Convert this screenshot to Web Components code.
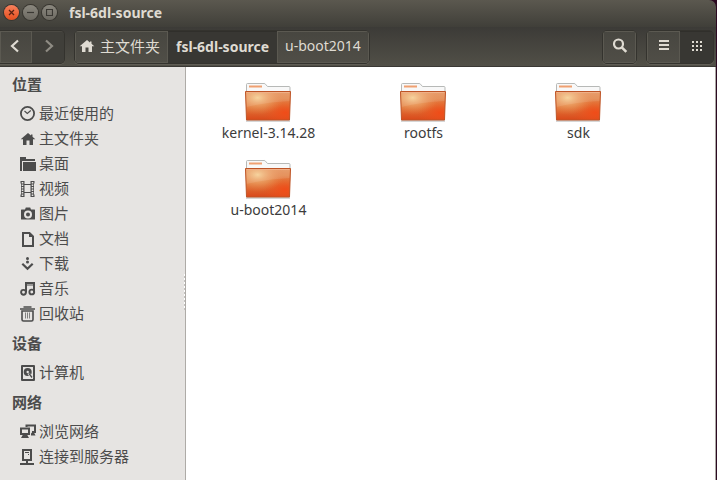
<!DOCTYPE html>
<html lang="zh-CN">
<head>
<meta charset="utf-8">
<title>fsl-6dl-source</title>
<style>
html,body{height:100%}
body{margin:0;background:#2c0a22;overflow:hidden;font-family:"Noto Sans","Noto Sans CJK SC",sans-serif;font-size:14px}
</style>
</head>
<body>
<file-window></file-window>
<script>
const S = (w, h, body, vb) => `<svg width="${w}" height="${h}" viewBox="${vb || `0 0 ${w} ${h}`}" aria-hidden="true">${body}</svg>`;
const stroke = 'fill="none" stroke="currentColor"';
const ICONS = {
  close: S(7,7,`<path d="M1 1l5 5M6 1L1 6" ${stroke} stroke-width="1.3"/>`),
  min: S(7,7,`<path d="M0 3.5h7" ${stroke} stroke-width="1.2"/>`),
  max: S(7,7,`<path d="M.5.5h6v6h-6z" ${stroke} stroke-width="1.2"/>`),
  back: S(16,16,`<path d="M10 2.500L4 8l6 5.500" ${stroke} stroke-width="2.2"/>`),
  forward: S(16,16,`<path d="M6 2.500L12 8l-6 5.500" ${stroke} stroke-width="2.2"/>`),
  home: S(16,16,`<path d="M8 2L.7 8.300H3V14h3.500V9.500h3V14H13V8.300h2.300L12.500 5.800V3.500h-1.500v1z" fill="currentColor"/>`),
  search: S(16,16,`<circle cx="6.500" cy="6" r="4.500" ${stroke} stroke-width="2.200"/><path d="M9.800 9.300l4.500 4.500" ${stroke} stroke-width="2.600"/>`),
  list: S(16,16,`<path d="M3 3h10M3 7h10M3 11h10" ${stroke} stroke-width="2"/>`),
  grid: S(16,16,[3,7,11].map(y=>[3,7,11].map(x=>`<rect x="${x}" y="${y}" width="2" height="2" fill="currentColor"/>`).join('')).join('')),
  recent: S(16,16,`<circle cx="7.500" cy="7.500" r="6.600" ${stroke} stroke-width="1.800"/><path d="M4.500 5l2.800 2.500 3.500-3" ${stroke} stroke-width="1.200"/>`),
  desktop: S(16,16,`<path d="M0 1h6v2h9v2H2v10H0z" fill="currentColor"/><path d="M3 6h13v9H3z" fill="currentColor"/>`),
  video: S(16,16,`<path d="M2.500 0v16M12.500 0v16" ${stroke} stroke-width="4"/><path d="M4 3.500h8M4 11.500h8" ${stroke}/><path d="M2.500 1v15M12.500 1v15" stroke="#e6e4e2" stroke-width="1.600" stroke-dasharray="1.500 1"/><path d="M0 2.500h1v11H0zM14 2.500h1v11h-1z" fill="#e6e4e2"/>`),
  photo: S(16,16,`<path fill-rule="evenodd" d="M1.500 3.500H5l.8-2h4.400l.8 2h3.500q.5 0 .5.500v9q0 .5-.5.500h-13q-.5 0-.5-.500v-9q0-.5.500-.500zM8 4.500a4 4 0 1 0 0 8 4 4 0 0 0 0-8zm0 2a2 2 0 1 1 0 4 2 2 0 0 1 0-4z" fill="currentColor"/>`),
  doc: S(16,16,`<path d="M3 2h6.500L13 5.500V15H3z" ${stroke} stroke-width="2"/><path d="M9 2v4h4z" fill="currentColor"/>`),
  download: S(16,16,`<circle cx="7.500" cy="2.500" r="1.500" fill="currentColor"/><circle cx="7.500" cy="6" r="1.500" fill="currentColor"/><path d="M2.300 7.800l5.200 5 5.200-5" ${stroke} stroke-width="2.200"/>`),
  music: S(16,16,`<path d="M6 11.500V2h8v9" ${stroke} stroke-width="2"/><path d="M6 4h8" ${stroke}/><circle cx="3.500" cy="11.300" r="2.400" ${stroke} stroke-width="1.900"/><circle cx="11.800" cy="11" r="2.400" ${stroke} stroke-width="1.900"/>`),
  trash: S(16,16,`<path d="M3.500 1h8M0 3h15" ${stroke} stroke-width="1.600"/><path d="M2 5h11v8.500q0 1.500-1.500 1.500h-8Q2 15 2 13.500z" ${stroke} stroke-width="1.600"/><path d="M5.500 6.500v6M7.500 6.500v6M9.500 6.500v6" ${stroke} stroke-opacity=".65"/>`),
  disk: S(16,16,`<path fill-rule="evenodd" d="M2 0h12q1 0 1 1v14q0 1-1 1H2q-1 0-1-1V1q0-1 1-1zm1 2v12h10V2z" fill="currentColor"/><circle cx="7.700" cy="7" r="4" fill="currentColor"/><circle cx="7.700" cy="7" r="1.200" fill="#e6e4e2"/><path d="M8.500 8.500l4 4.500" stroke="#e6e4e2" stroke-width="2.500"/><path d="M9 8.500l3 4" ${stroke} stroke-width="1.300"/>`),
  network: S(16,16,`<path d="M6.500 3V1.500H15V8h-3" ${stroke} stroke-width="2"/><path d="M1 4.500h8V10H1z" ${stroke} stroke-width="2"/><path d="M3 10.500h4L9 14H1zM12 8.500h2l1.500 3H11v-2z" fill="currentColor"/>`),
  server: S(16,16,`<path d="M3 1h8v10H3z" ${stroke} stroke-width="2"/><path d="M5 3.500h4M8 5.500h1" ${stroke}/><path d="M7 11v4M0 15h14" ${stroke} stroke-width="2"/>`)
};
const define = (name, css, html, setup) => customElements.define(name, class extends HTMLElement {
  connectedCallback() {
    if (this.shadowRoot) return;
    const root = this.attachShadow({mode: 'open'});
    root.innerHTML = `<style>*{box-sizing:border-box}button{font:inherit;color:inherit;border:0;background:none;padding:0;margin:0}svg{display:block;flex:none}${css}</style>${typeof html === 'function' ? html(this) : html}`;
    if (setup) setup(this, root);
  }
});

define('ui-icon', ':host{display:block;flex:none}', el => ICONS[el.getAttribute('name')]);

define('title-bar', `
:host{display:flex;align-items:center;gap:4px;height:27px;padding:0 4px 2px;background:linear-gradient(#5b584f,#403f39);color:#dfdbd2;font-weight:700;border-radius:0 7px 0 0;box-sizing:border-box}
button{display:grid;place-items:center;width:15px;height:15px;border-radius:50%;background:linear-gradient(#8a877e,#6d6a62);color:#3a3833;box-shadow:0 0 0 1px #383630}
button.close{background:linear-gradient(#f7805c,#e5501f);color:#5a2212}
h1{margin:0 0 0 8px;font-size:14px;line-height:20px}`,
`<button class="close" aria-label="关闭"><ui-icon name="close"></ui-icon></button><button aria-label="最小化"><ui-icon name="min"></ui-icon></button><button aria-label="最大化"><ui-icon name="max"></ui-icon></button><h1><slot></slot></h1>`);

define('button-group', `
:host{display:flex;height:34px;box-sizing:border-box;border:1px solid #34332e;border-radius:5px;overflow:hidden;box-shadow:0 1px #605d55}
:host([start]){border-left:0;border-radius:0 5px 5px 0}`, '<slot></slot>');

define('tool-button', `
:host{display:flex}
button{display:flex;align-items:center;justify-content:center;gap:5px;min-width:32px;padding:0 var(--pad,8px) 2px;background:linear-gradient(#474640,#504e47);box-shadow:inset 0 0 0 1px #5b5951;color:#dfdbd2;line-height:20px;white-space:nowrap}
:host([active]) button{background:#383733;box-shadow:inset 0 1px #302f2b;font-weight:700}
:host([dim]) button{color:#8f8c84;background:#403f3a;box-shadow:inset 0 1px #4c4a44}
:host([wide]) button{min-width:33px}
:host([active]:not([wide])) button{padding-bottom:0}
:host([cjk]) button{font-size:15px;padding:0 8px 2px 4px}`, '<button type="button"><slot></slot></button>',
(el, root) => { const l = el.getAttribute('label'); if (l) root.querySelector('button').setAttribute('aria-label', l); });

define('tool-bar', `
:host{display:flex;align-items:center;gap:9px;height:40px;padding:0 2px 0 0;box-sizing:border-box;background:linear-gradient(#3c3b37,#514f47);border-bottom:1px solid #3a3834}
.spacer{flex:1}`,
`<button-group start><tool-button label="后退"><ui-icon name="back"></ui-icon></tool-button><tool-button dim label="前进"><ui-icon name="forward"></ui-icon></tool-button></button-group>
<button-group><tool-button cjk><ui-icon name="home"></ui-icon>主文件夹</tool-button><tool-button active>fsl-6dl-source</tool-button><tool-button>u-boot2014</tool-button></button-group>
<span class="spacer"></span>
<button-group><tool-button wide label="搜索"><ui-icon name="search"></ui-icon></tool-button></button-group>
<button-group><tool-button wide label="列表视图"><ui-icon name="list"></ui-icon></tool-button><tool-button wide active label="图标视图"><ui-icon name="grid"></ui-icon></tool-button></button-group>`);

define('side-section', `
:host{display:block}
h2{margin:0;padding:1px 12px 0;font-size:15px;line-height:33px;font-weight:700}`,
el => `<h2>${el.getAttribute('heading')}</h2><slot></slot>`);

define('side-item', `
:host{display:block}
a{display:flex;align-items:center;gap:3px;height:25px;padding-left:20px;color:inherit;text-decoration:none;font-size:15px;line-height:25px}`,
el => `<a href="#"><ui-icon name="${el.getAttribute('icon')}"></ui-icon><slot></slot></a>`);

define('side-bar', `
:host{position:relative;display:block;flex:none;width:186px;box-sizing:border-box;background:#e6e4e2;border-right:1px solid #aeaba7;color:#4c4c4c}
.grip{position:absolute;right:0;top:50%;width:1px;height:36px;background:repeating-linear-gradient(#fff 0 2px,#c4c2bf 2px 4px)}`,
`<slot></slot><span class="grip"></span>`);

define('folder-item', `
:host{display:flex;flex-direction:column;align-items:center;height:77px;color:#3c3c3c}
span{line-height:20px}`,
el => `<svg width="50" height="42" viewBox="1 -1 50 42" aria-hidden="true"><defs>
<linearGradient id="f" x1="0" y1="0" x2="0" y2="1"><stop offset="0" stop-color="#e5935c"/><stop offset=".5" stop-color="#e17a3c"/><stop offset="1" stop-color="#d9481a"/></linearGradient>
<radialGradient id="g" cx=".27" cy=".22" r=".6"><stop offset="0" stop-color="#f5cf94"/><stop offset="1" stop-color="#e98348" stop-opacity="0"/></radialGradient>
<radialGradient id="r" cx=".88" cy=".75" r=".5"><stop offset="0" stop-color="#f04c18"/><stop offset="1" stop-color="#ea501c" stop-opacity="0"/></radialGradient></defs>
<path d="M3 39h44" stroke="#000" stroke-opacity=".16" stroke-width="2"/>
<path d="M3.500 12V2.500q0-1 1-1h16.500q1 0 1.500.700l2 2.300h21.500q1 0 1 1V12z" fill="#f8f8f8" stroke="#b7b9b7"/>
<path d="M6 3.500h13v2H6z" fill="#f0a071"/>
<path d="M2.500 9.500h45L46.500 38h-43z" fill="url(#f)"/><path d="M2.500 9.500h45L46.500 38h-43z" fill="url(#r)"/><path d="M2.500 9.500h45L46.500 38h-43z" fill="url(#g)"/>
<path d="M3 10h44l-.4 9Q24 20 3.300 25z" fill="#fff" fill-opacity=".1"/>
<path d="M2.500 9.500h45L46.500 38h-43z" fill="none" stroke="#be5426"/><path d="M3.500 10.500h43" stroke="#f0b088"/></svg><span><slot></slot></span>`);

define('folder-view', `
:host{display:grid;flex:1;grid-template-columns:repeat(auto-fill,155px);align-content:start;padding:14px 0 0 5px;background:#fff}`, '<slot></slot>');

define('file-window', `
:host{display:flex;flex-direction:column;height:100vh;margin-right:1px}
main{display:flex;flex:1;min-height:0;border-right:1px solid #aaa7a3}`,
`<title-bar>fsl-6dl-source</title-bar><tool-bar></tool-bar>
<main><side-bar>
<side-section heading="位置"><side-item icon="recent">最近使用的</side-item><side-item icon="home">主文件夹</side-item><side-item icon="desktop">桌面</side-item><side-item icon="video">视频</side-item><side-item icon="photo">图片</side-item><side-item icon="doc">文档</side-item><side-item icon="download">下载</side-item><side-item icon="music">音乐</side-item><side-item icon="trash">回收站</side-item></side-section>
<side-section heading="设备"><side-item icon="disk">计算机</side-item></side-section>
<side-section heading="网络"><side-item icon="network">浏览网络</side-item><side-item icon="server">连接到服务器</side-item></side-section>
</side-bar><folder-view><folder-item>kernel-3.14.28</folder-item><folder-item>rootfs</folder-item><folder-item>sdk</folder-item><folder-item>u-boot2014</folder-item></folder-view></main>`);
</script>
</body>
</html>
